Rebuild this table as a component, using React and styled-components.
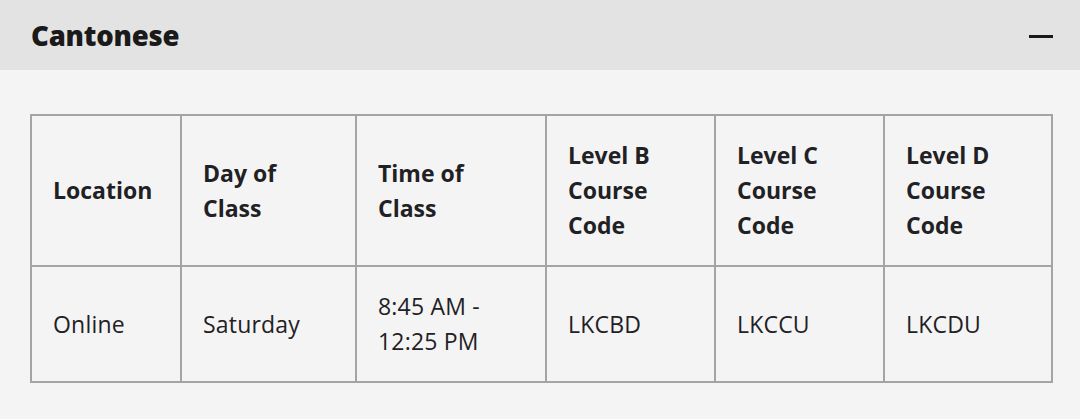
import React from "react";
import styled, { createGlobalStyle } from "styled-components";

const GlobalStyle = createGlobalStyle`
  html, body {
    margin: 0;
    padding: 0;
    background: #f4f4f4;
    font-family: "Open Sans", "DejaVu Sans", sans-serif;
    color: #1f2124;
  }
`;

const Accordion = styled.section`
  width: 1080px;
  background: #f4f4f4;
`;

const Header = styled.div`
  height: 70px;
  background: #e3e3e3;
  display: flex;
  align-items: center;
  justify-content: space-between;
  padding: 0 27px 0 31px;
  box-sizing: border-box;
`;

const Title = styled.h3`
  margin: 0;
  font-size: 27.5px;
  font-weight: 800;
  color: #1a1a1a;
  letter-spacing: -0.2px;
`;

const Minus = styled.span`
  display: block;
  width: 24px;
  height: 3px;
  margin-top: 2px;
  background: #1a1a1a;
`;

const Body = styled.div`
  padding: 44px 28px 37px 30px;
`;

const Table = styled.table`
  width: 100%;
  border-collapse: collapse;
  table-layout: fixed;
  border: 2px solid #a4a4a4;
`;

const Cell = styled.td`
  border: 2px solid #a4a4a4;
  padding: 22px 21px;
  font-size: 23px;
  line-height: 35px;
  font-weight: ${(p) => (p.$head ? 700 : 400)};
  letter-spacing: ${(p) => (p.$head ? "0" : "0.2px")};
  vertical-align: middle;
  text-align: left;
`;

const widths = [150, 175, 190, 169, 169, 168];

const headers = [
  ["Location"],
  ["Day of", "Class"],
  ["Time of", "Class"],
  ["Level B", "Course", "Code"],
  ["Level C", "Course", "Code"],
  ["Level D", "Course", "Code"],
];

const row = [["Online"], ["Saturday"], ["8:45 AM -", "12:25 PM"], ["LKCBD"], ["LKCCU"], ["LKCDU"]];

function Lines({ lines }) {
  return lines.map((l, i) => (
    <React.Fragment key={i}>
      {i > 0 && <br />}
      {l}
    </React.Fragment>
  ));
}

export default function App() {
  return (
    <>
      <GlobalStyle />
      <Accordion>
        <Header>
          <Title>Cantonese</Title>
          <Minus />
        </Header>
        <Body>
          <Table>
            <colgroup>
              {widths.map((w, i) => (
                <col key={i} style={{ width: w }} />
              ))}
            </colgroup>
            <tbody>
              <tr>
                {headers.map((h, i) => (
                  <Cell as="th" $head key={i}>
                    <Lines lines={h} />
                  </Cell>
                ))}
              </tr>
              <tr>
                {row.map((c, i) => (
                  <Cell key={i}>
                    <Lines lines={c} />
                  </Cell>
                ))}
              </tr>
            </tbody>
          </Table>
        </Body>
      </Accordion>
    </>
  );
}
